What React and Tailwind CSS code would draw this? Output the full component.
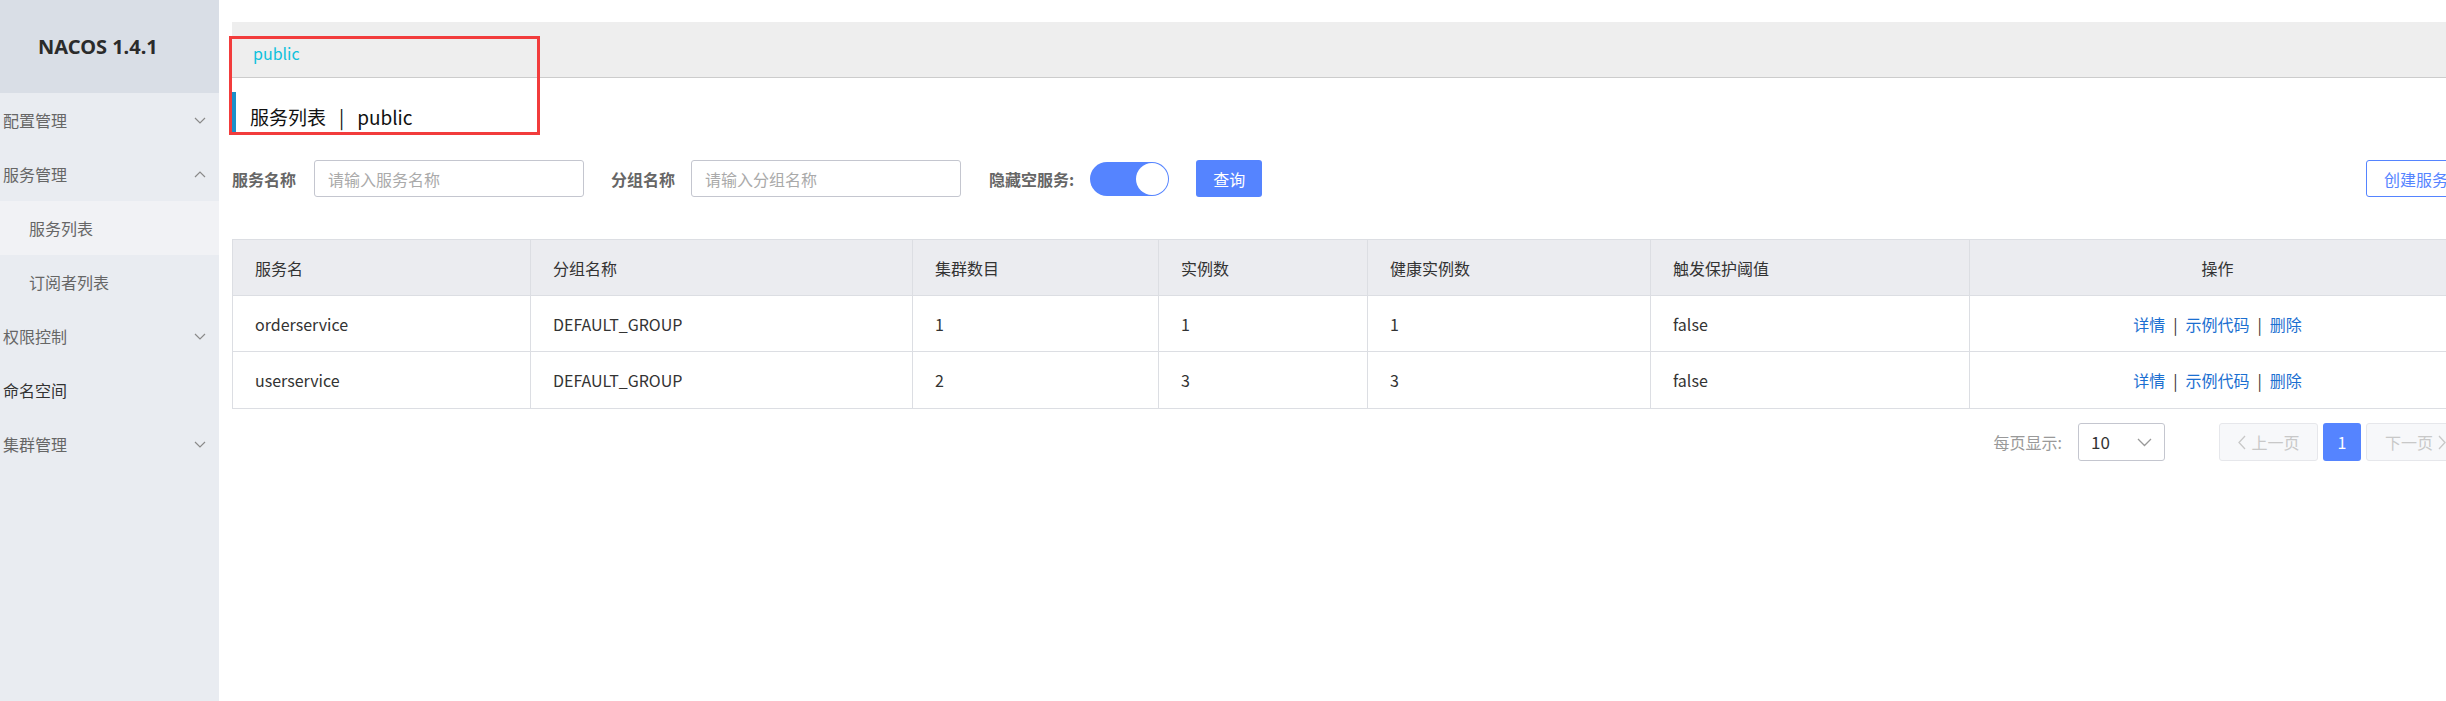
import React from 'react';

const font = "font-['Noto_Sans_CJK_SC','Noto_Sans',sans-serif]";

function Chevron({ up = false, className = '' }) {
    return (
        <svg width="12" height="7" viewBox="0 0 12 7" className={className}>
            <polyline
                points={up ? '1,6 6,1 11,6' : '1,1 6,6 11,1'}
                fill="none"
                stroke="#8a8a8a"
                strokeWidth="1.2"
            />
        </svg>
    );
}

function Sidebar() {
    const items = [
        { label: '配置管理', arrow: 'down' },
        { label: '服务管理', arrow: 'up' },
        { label: '服务列表', sub: true, active: true },
        { label: '订阅者列表', sub: true },
        { label: '权限控制', arrow: 'down' },
        { label: '命名空间', dark: true },
        { label: '集群管理', arrow: 'down' },
    ];

    return (
        <aside className="w-[219px] shrink-0 h-full bg-[#e9ecf1]">
            {/* Logo */}
            <div className="h-[93px] bg-[#d9dee6] flex items-center pl-[38px] text-[20px] font-bold text-[#2b2b2b] font-['Noto_Sans',sans-serif]">
                NACOS 1.4.1
            </div>

            {/* Menu */}
            {items.map((item) => (
                <div
                    key={item.label}
                    className={`h-[54px] flex items-center justify-between pr-[13px] text-[16px] ${
                        item.sub ? 'pl-[29px]' : 'pl-[3px]'
                    } ${item.active ? 'bg-[#f1f2f5]' : ''} ${item.dark ? 'text-[#333]' : 'text-[#666]'}`}
                >
                    <span>{item.label}</span>
                    {item.arrow && <Chevron up={item.arrow === 'up'} />}
                </div>
            ))}
        </aside>
    );
}

function FilterBar() {
    return (
        <div className="mt-[28px] h-[37px] flex items-center">
            <span className="text-[16px] font-bold text-[#666]">服务名称</span>
            <div className="ml-[18px] w-[270px] h-[37px] border border-[#c4c6cf] rounded-[3px] flex items-center pl-[13px] text-[16px] text-[#aaa]">
                请输入服务名称
            </div>

            <span className="ml-[27px] text-[16px] font-bold text-[#666]">分组名称</span>
            <div className="ml-[16px] w-[270px] h-[37px] border border-[#c4c6cf] rounded-[3px] flex items-center pl-[13px] text-[16px] text-[#aaa]">
                请输入分组名称
            </div>

            <span className="ml-[28px] text-[16px] font-bold text-[#666]">隐藏空服务:</span>
            {/* Switch */}
            <div className="ml-[16px] w-[79px] h-[34px] rounded-full bg-[#5584ff] flex items-center justify-end p-[1px]">
                <div className="w-[32px] h-[32px] rounded-full bg-white" />
            </div>

            <button className="ml-[27px] w-[66px] h-[37px] rounded-[3px] bg-[#5584ff] text-white text-[16px]">
                查询
            </button>

            <button className="ml-auto w-[100px] h-[37px] rounded-[3px] border border-[#5584ff] text-[#5584ff] text-[16px]">
                创建服务
            </button>
        </div>
    );
}

const columns = [
    { title: '服务名', w: 'w-[297px]' },
    { title: '分组名称', w: 'w-[382px]' },
    { title: '集群数目', w: 'w-[246px]' },
    { title: '实例数', w: 'w-[209px]' },
    { title: '健康实例数', w: 'w-[283px]' },
    { title: '触发保护阈值', w: 'w-[319px]' },
    { title: '操作', w: 'flex-1', center: true },
];

const rows = [
    ['orderservice', 'DEFAULT_GROUP', '1', '1', '1', 'false'],
    ['userservice', 'DEFAULT_GROUP', '2', '3', '3', 'false'],
];

function Actions() {
    return (
        <span className="text-[16px]">
            <span className="text-[#1b6fd1]">详情</span>
            <span className="text-[#333] mx-[8px]">|</span>
            <span className="text-[#1b6fd1]">示例代码</span>
            <span className="text-[#333] mx-[8px]">|</span>
            <span className="text-[#1b6fd1]">删除</span>
        </span>
    );
}

function ServiceTable() {
    return (
        <div className="mt-[42px] border border-[#dcdee3]">
            {/* Header */}
            <div className="flex h-[56px] bg-[#ebecf0] border-b border-[#dcdee3]">
                {columns.map((c, i) => (
                    <div
                        key={c.title}
                        className={`${c.w} flex items-center text-[16px] text-[#333] ${
                            c.center ? 'justify-center' : 'pl-[22px]'
                        } ${i > 0 ? 'border-l border-[#dcdee3]' : ''}`}
                    >
                        {c.title}
                    </div>
                ))}
            </div>

            {/* Rows */}
            {rows.map((r, ri) => (
                <div
                    key={r[0]}
                    className={`flex h-[56px] ${ri < rows.length - 1 ? 'border-b border-[#dcdee3]' : ''}`}
                >
                    {columns.map((c, i) => (
                        <div
                            key={c.title}
                            className={`${c.w} flex items-center text-[16px] text-[#333] ${
                                c.center ? 'justify-center' : 'pl-[22px]'
                            } ${i > 0 ? 'border-l border-[#dcdee3]' : ''}`}
                        >
                            {c.center ? <Actions /> : r[i]}
                        </div>
                    ))}
                </div>
            ))}
        </div>
    );
}

function Pagination() {
    return (
        <div className="mt-[14px] h-[38px] flex items-center justify-end text-[16px]">
            <span className="text-[#999]">每页显示:</span>
            <div className="ml-[16px] w-[87px] h-[38px] border border-[#c4c6cf] rounded-[3px] flex items-center justify-between pl-[12px] pr-[12px]">
                <span className="text-[17px] text-[#333]">10</span>
                <svg width="15" height="9" viewBox="0 0 15 9">
                    <polyline points="1,1 7.5,7.5 14,1" fill="none" stroke="#999" strokeWidth="1.3" />
                </svg>
            </div>

            <div className="ml-[54px] w-[99px] h-[38px] border border-[#e6e7eb] bg-[#f7f8fa] rounded-[3px] flex items-center justify-center gap-[4px] text-[#c8c8c8]">
                <svg width="10" height="15" viewBox="0 0 10 15">
                    <polyline points="8,1 2,7.5 8,14" fill="none" stroke="#c8c8c8" strokeWidth="1.3" />
                </svg>
                <span>上一页</span>
            </div>
            <div className="ml-[5px] w-[38px] h-[38px] rounded-[3px] bg-[#5584ff] text-white flex items-center justify-center">
                1
            </div>
            <div className="ml-[5px] w-[100px] h-[38px] border border-[#e6e7eb] bg-[#f7f8fa] rounded-[3px] flex items-center justify-center gap-[4px] text-[#c8c8c8]">
                <span>下一页</span>
                <svg width="10" height="15" viewBox="0 0 10 15">
                    <polyline points="2,1 8,7.5 2,14" fill="none" stroke="#c8c8c8" strokeWidth="1.3" />
                </svg>
            </div>
        </div>
    );
}

export default function App() {
    return (
        <div className={`flex w-[2446px] h-[701px] overflow-hidden bg-white ${font}`}>
            <Sidebar />

            <main className="relative w-[2300px] shrink-0 pl-[13px] pt-[22px]">
                <div className="w-[2234px]">
                    {/* Breadcrumb */}
                    <div className="h-[56px] bg-[#eeeeee] border-b border-[#cccccc] flex items-center pl-[21px] pt-[6px] text-[16px] text-[#0fc1dc]">
                        public
                    </div>

                    {/* Title */}
                    <div className="mt-[14px] h-[40px] border-l-4 border-[#1a8fc9] flex items-end pl-[14px]">
                        <span className="text-[19px] leading-[30px] text-[#111]">
                            服务列表
                            <span className="mx-[13px]">|</span>
                            public
                        </span>
                    </div>

                    <FilterBar />
                    <ServiceTable />
                    <Pagination />
                </div>

                {/* Annotation box */}
                <div className="absolute left-[10px] top-[36px] w-[311px] h-[99px] border-[3px] border-[#f23c3c]" />
            </main>
        </div>
    );
}
